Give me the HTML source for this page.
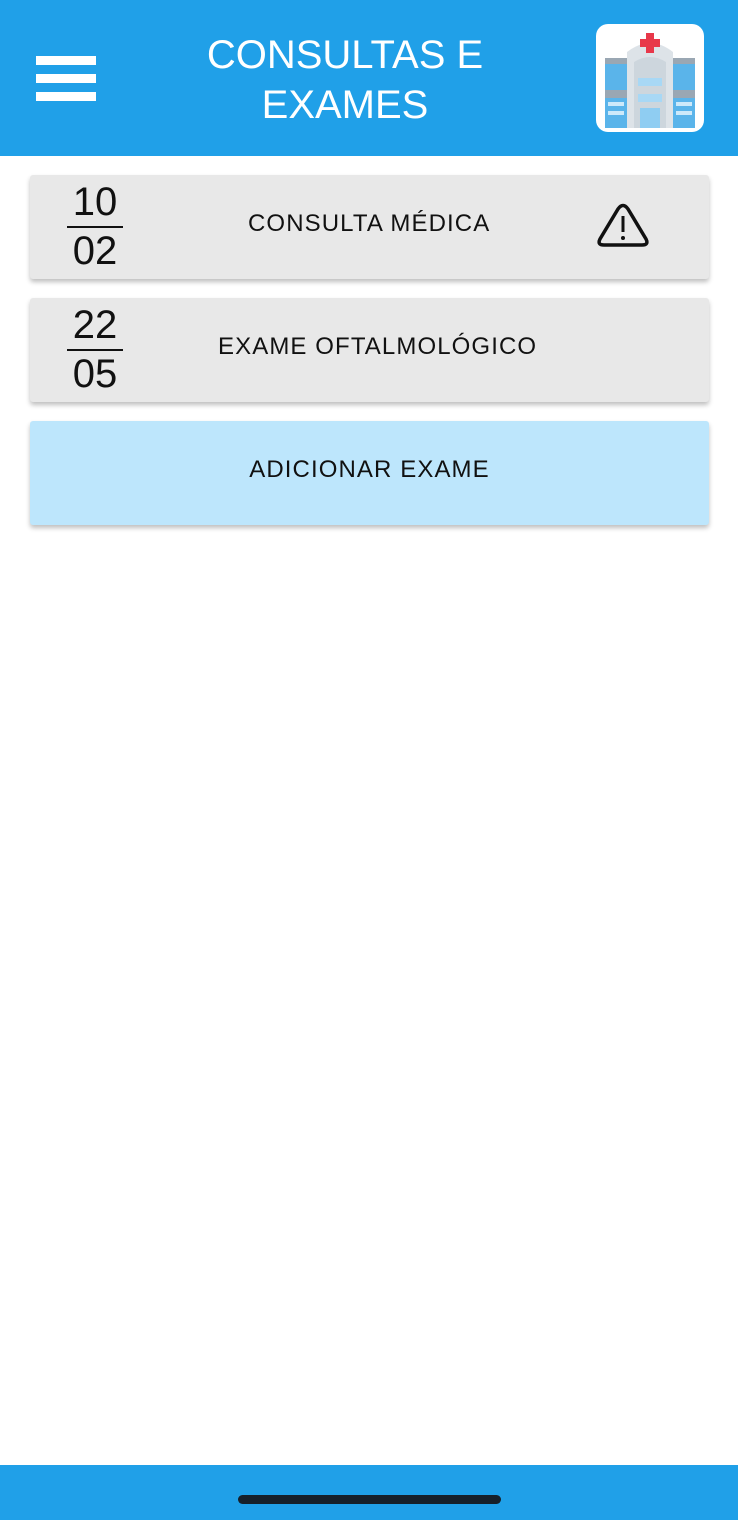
<!DOCTYPE html>
<html><head><meta charset="utf-8"><style>
*{margin:0;padding:0;box-sizing:border-box}
body{width:738px;height:1520px;background:#fff;font-family:"Liberation Sans",sans-serif;position:relative;overflow:hidden}
.hdr{position:absolute;left:0;top:0;width:738px;height:156px;background:#20a0e8}
.bar{position:absolute;left:36px;width:60px;height:9px;background:#fff}
.title{position:absolute;left:195px;width:300px;top:30px;text-align:center;color:#fff;font-size:40px;line-height:50px}
.logo{position:absolute;left:596px;top:24px;width:108px;height:108px;background:#fff;border-radius:12px;overflow:hidden}
.card{position:absolute;left:30px;width:679px;height:104px;background:#e8e8e8;border-radius:3px;box-shadow:0 3px 5px rgba(0,0,0,.25)}
.date{position:absolute;left:37px;width:56px;top:4px;text-align:center;font-size:40px;line-height:47px;color:#111}
.date .l{height:2px;background:#111;margin:0}
.lbl{position:absolute;top:-3px;height:100%;display:flex;align-items:center;font-size:24px;color:#111;letter-spacing:1.1px}
.btn{background:#bde6fc}
.foot{position:absolute;left:0;top:1465px;width:738px;height:55px;background:#20a0e8}
.home{position:absolute;left:238px;top:1495px;width:263px;height:9px;border-radius:5px;background:#16202a}
</style></head><body>
<div class="hdr">
<div class="bar" style="top:56px"></div><div class="bar" style="top:74px"></div><div class="bar" style="top:92px"></div>
<div class="title">CONSULTAS E<br>EXAMES</div>
<div class="logo"><svg width="108" height="108" viewBox="0 0 108 108">
<rect x="9" y="34" width="22" height="70" fill="#5ab4ea"/><rect x="77" y="34" width="22" height="70" fill="#5ab4ea"/>
<rect x="9" y="34" width="22" height="6" fill="#9aa7b3"/><rect x="77" y="34" width="22" height="6" fill="#9aa7b3"/>
<rect x="9" y="66" width="22" height="8" fill="#9aa7b3"/><rect x="77" y="66" width="22" height="8" fill="#9aa7b3"/>
<rect x="12" y="78" width="16" height="4" fill="#cde9fa"/><rect x="80" y="78" width="16" height="4" fill="#cde9fa"/>
<rect x="12" y="87" width="16" height="4" fill="#cde9fa"/><rect x="80" y="87" width="16" height="4" fill="#cde9fa"/>
<path d="M31 104V28Q54 10 77 28V104Z" fill="#dde3e8"/>
<path d="M38 104V38Q54 28 70 38V104Z" fill="#cdd6dd"/>
<rect x="42" y="54" width="24" height="8" fill="#a8d8f5"/><rect x="42" y="70" width="24" height="8" fill="#a8d8f5"/>
<rect x="44" y="84" width="20" height="20" fill="#8fcdf2"/>
<rect x="50" y="9" width="8" height="20" fill="#e8384a"/><rect x="44" y="15" width="20" height="8" fill="#e8384a"/>
</svg></div>
</div>
<div class="card" style="top:175px">
<div class="date">10<div class="l"></div>02</div>
<div class="lbl" style="left:218px">CONSULTA MÉDICA</div>
<svg style="position:absolute;left:566px;top:26px" width="54" height="50" viewBox="0 0 54 50"><path d="M22 8Q27 1 32 8L50 38Q53 44 46 44H8Q1 44 4 38Z" fill="none" stroke="#111" stroke-width="3.5" stroke-linejoin="round"/><rect x="25.5" y="15" width="3" height="16" fill="#111"/><circle cx="27" cy="37" r="2" fill="#111"/></svg>
</div>
<div class="card" style="top:298px">
<div class="date">22<div class="l"></div>05</div>
<div class="lbl" style="left:188px">EXAME OFTALMOLÓGICO</div>
</div>
<div class="card btn" style="top:421px">
<div class="lbl" style="left:0;width:100%;justify-content:center">ADICIONAR EXAME</div>
</div>
<div class="foot"></div><div class="home"></div>
</body></html>
